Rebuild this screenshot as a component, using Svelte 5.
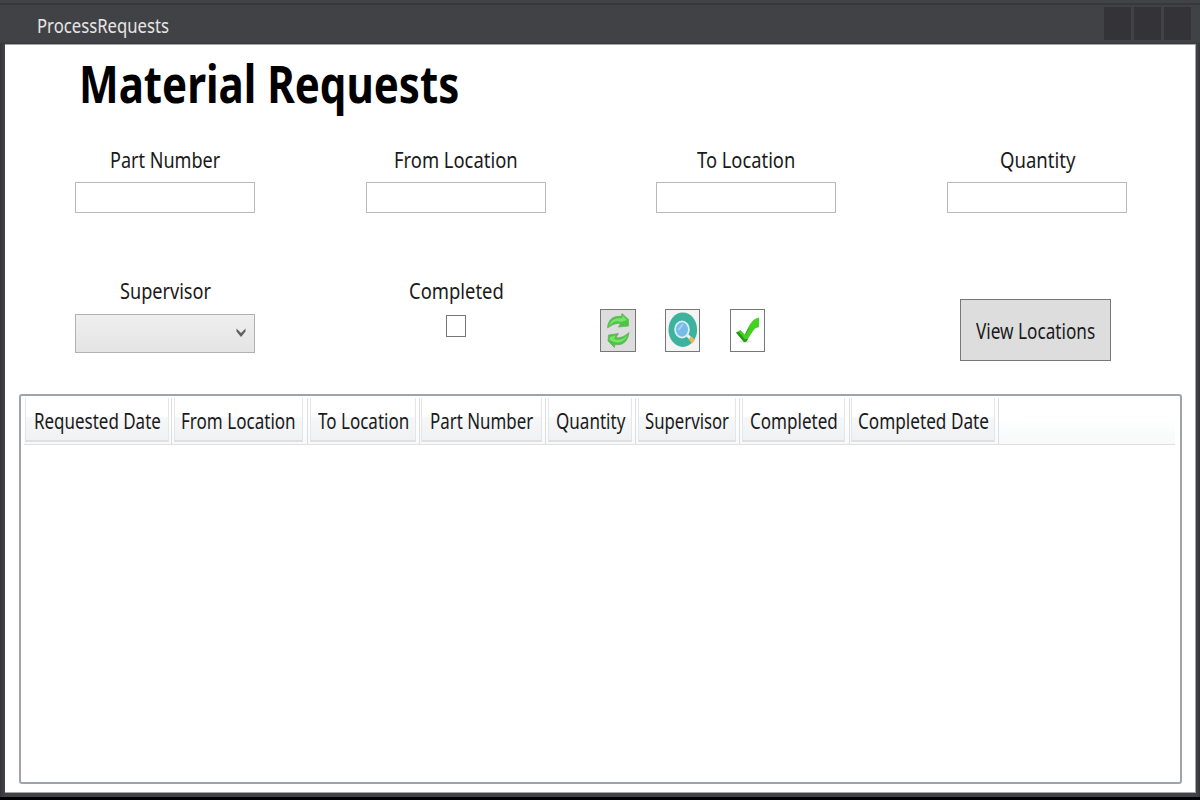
<script>
  const fields = [
    { label: 'Part Number', width: 110 },
    { label: 'From Location', width: 124 },
    { label: 'To Location', width: 98 },
    { label: 'Quantity', width: 75 }
  ];

  const columns = [
    { label: 'Requested Date', outer: 148, inner: 144, width: 127 },
    { label: 'From Location', outer: 136, inner: 129, width: 115 },
    { label: 'To Location', outer: 112, inner: 106, width: 91 },
    { label: 'Part Number', outer: 126, inner: 121, width: 103 },
    { label: 'Quantity', outer: 90, inner: 84, width: 69 },
    { label: 'Supervisor', outer: 104, inner: 98, width: 84 },
    { label: 'Completed', outer: 110, inner: 103, width: 88 },
    { label: 'Completed Date', outer: 149, inner: 144, width: 131 }
  ];

  // Condenses a line of text to the width of its box.
  function fit(node, width) {
    node.style.transform = `scaleX(${width / node.offsetWidth})`;
  }
</script>

{#snippet text(label, width)}
  <span class="text" style="width: {width}px"><span class="run" use:fit={width}>{label}</span></span>
{/snippet}

<div class="window">
  <header class="titlebar">
    <div class="caption">{@render text('ProcessRequests', 132)}</div>
    <div class="controls"><i></i><i></i><i></i></div>
  </header>

  <main>
    <h1>{@render text('Material Requests', 380)}</h1>

    <section class="fields">
      {#each fields as field}
        <div class="field">
          <div class="label">{@render text(field.label, field.width)}</div>
          <div class="input"></div>
        </div>
      {/each}
    </section>

    <section class="actions">
      <div class="field">
        <div class="label">{@render text('Supervisor', 91)}</div>
        <div class="select">
          <svg width="12" height="12" viewBox="0 0 12 12"><path d="M1.5 1.5 6 6 10.5 1.5V4.5L6 10 1.5 4.5Z" fill="#606060" /></svg>
        </div>
      </div>
      <div class="field completed">
        <div class="label">{@render text('Completed', 95)}</div>
        <div class="check"></div>
      </div>
      <div class="tools">
        <div class="tool">
          <svg width="34" height="41" viewBox="0 0 34 41">
            <g stroke="#78a873" stroke-width=".8" stroke-linejoin="round">
              <path d="M6.5 18C7 10 12 5.500 20 6.500L21 3.500 27.500 9.500 27.500 16 17.500 17 19.500 13.500C14 13 11 15 6.500 18Z" fill="#48c83f" />
              <path d="M8 16C10 10 14 7.500 21 8.500L21.500 5.500 26 10 20 12C15 10 12 12 8 16Z" fill="#79e36c" stroke="none" />
              <path d="M28 22.500C27 31 22 36 14 34.500L13.500 37.500 7 31 7.500 25 17.500 23.500 15 27.500C20 28.500 24 26 28 22.500Z" fill="#48c83f" />
              <path d="M26.500 25C24 31 20 33.500 13 32L8.500 30 9 27 14.500 25.500 13 29C18 31 23 29 26.500 25Z" fill="#79e36c" stroke="none" />
            </g>
          </svg>
        </div>
        <div class="tool search">
          <svg width="33" height="41" viewBox="0 0 33 41">
            <ellipse cx="16.8" cy="19.7" rx="14.3" ry="17.2" fill="#3db39e" />
            <path d="M21 25 25 29" stroke="#e9f5f5" stroke-width="3" />
            <ellipse cx="16" cy="19.5" rx="7.8" ry="9" fill="#d9eff8" />
            <ellipse cx="16" cy="19.5" rx="6" ry="7.2" fill="#78bbe6" />
            <path d="M12.5 20 17 14" stroke="#a7d8f2" stroke-width="1.500" />
            <path d="M22.5 29 25.5 26.5 29 30 26 33.5Z" fill="#efb45c" />
          </svg>
        </div>
        <div class="tool done">
          <svg width="33" height="41" viewBox="0 0 33 41">
            <ellipse cx="14" cy="31.5" rx="6" ry="1.5" fill="#e5e5e5" />
            <path d="M5 22.500 9.500 20 14 25C17 17 20 11 25 8.500L28 7.500V17L24 18.500C21 22 18 27 15.500 31.500L13 32Z" fill="#45d022" />
            <path d="M5 22.500 13 32 15.500 31.500 17 28.500 14 29.500 8 22Z" fill="#24961a" />
            <path d="M14 25 18 18" stroke="#2faa1d" />
          </svg>
        </div>
      </div>
      <div class="view">{@render text('View Locations', 119)}</div>
    </section>

    <section class="list">
      <div class="head">
        {#each columns as column}
          <div class="column" style="width: {column.outer}px">
            <div class="cell" style="width: {column.inner}px">{@render text(column.label, column.width)}</div>
          </div>
        {/each}
      </div>
    </section>
  </main>
</div>

<style>
  :global(body) { margin: 0; background: #000; overflow: hidden; }
  * { box-sizing: border-box; }

  .window {
    width: 1200px;
    height: 797px;
    padding: 0 4px 4px 5px;
    background: linear-gradient(90deg, #343438 0, #414146 4px, #414146 1197px, #35353a 1200px);
    font: 21.5px/30px "Noto Sans", "Open Sans", sans-serif;
    color: #1a1a1a;
  }
  .text { display: inline-block; text-align: left; white-space: nowrap; }
  .run { display: inline-block; transform-origin: 0 50%; }

  .titlebar {
    display: flex;
    justify-content: space-between;
    height: 44px;
    margin: 0 -4px 0 -5px;
    padding: 7px 9px 0 37px;
    background: linear-gradient(#424348 0 3px, #38383c 3px 5px, #414246 5px 42px, #38383c 44px);
  }
  .caption { margin-top: 3px; font-size: 20.5px; color: #e6e6e6; }
  .controls { display: flex; gap: 3px; }
  .controls i { width: 27px; height: 33px; background: #343338; }

  main {
    height: 749px;
    padding: 0 14px 0 14px;
    background: #fff;
    border: 1px solid #a5a5a8;
    border-width: 1px 1px 1px 0;
  }
  h1 {
    height: 78px;
    margin: 0 0 0 60px;
    font-size: 52px;
    line-height: 75px;
    font-weight: 700;
    color: #000;
  }

  .fields { display: flex; height: 153px; padding: 22px 0 0 56px; gap: 111px; }
  .field { width: 180px; text-align: center; }
  .fields .field:nth-child(3) { margin-left: -1px; }
  .label { height: 30px; }
  .input { height: 31px; margin-top: 7px; border: 1px solid #b8b9bf; }

  .actions { display: flex; height: 117px; padding-left: 56px; align-items: flex-start; }
  .select {
    display: flex;
    justify-content: flex-end;
    align-items: center;
    height: 39px;
    margin-top: 8px;
    padding: 0 7px 2px 0;
    border: 1px solid #b1b1b1;
    background: linear-gradient(#efefef, #e4e4e4);
  }
  .completed { margin-left: 111px; }
  .check { width: 20px; height: 22px; margin: 9px auto 0; border: 1px solid #777; }
  .tools { display: flex; gap: 29px; margin: 33px 0 0 54px; }
  .tool {
    width: 36px;
    height: 43px;
    border: 1px solid #777;
    background: #ddd;
  }
  .tool svg { display: block; }
  .search { background: #f4f4f4; }
  .done { background: #fff; }
  .search, .done { width: 35px; }
  .search { margin-right: 1px; }
  .view {
    width: 151px;
    height: 62px;
    margin: 23px 0 0 195px;
    border: 1px solid #777;
    background: #ddd;
    line-height: 61px;
    text-align: center;
  }

  .list {
    width: 1163px;
    height: 390px;
    padding: 2px 5px 0 4px;
    border: 2px solid #a0a3ab;
    border-radius: 3px;
    margin-top: 1px;
  }
  .head {
    display: flex;
    height: 47px;
    margin-left: -1px;
    border-bottom: 1px solid #dedfe0;
    background: linear-gradient(#fff 0 48%, #fcfdfd 60%, #f9f9fa);
  }
  .column { border-right: 1px solid #dcdddf; padding-left: 2px; }
  .column:first-child { padding-left: 1px; }
  .column:nth-child(4) .cell, .column:last-child .cell { margin-left: -1px; }
  .cell {
    height: 44px;
    border: 1px solid #e5e6e8;
    border-top: 0;
    border-bottom: 2px solid #dedfe1;
    background: linear-gradient(#fff 0 43%, #f6f7f8 47%, #f0f1f3);
    line-height: 46px;
    text-align: center;
  }
</style>
